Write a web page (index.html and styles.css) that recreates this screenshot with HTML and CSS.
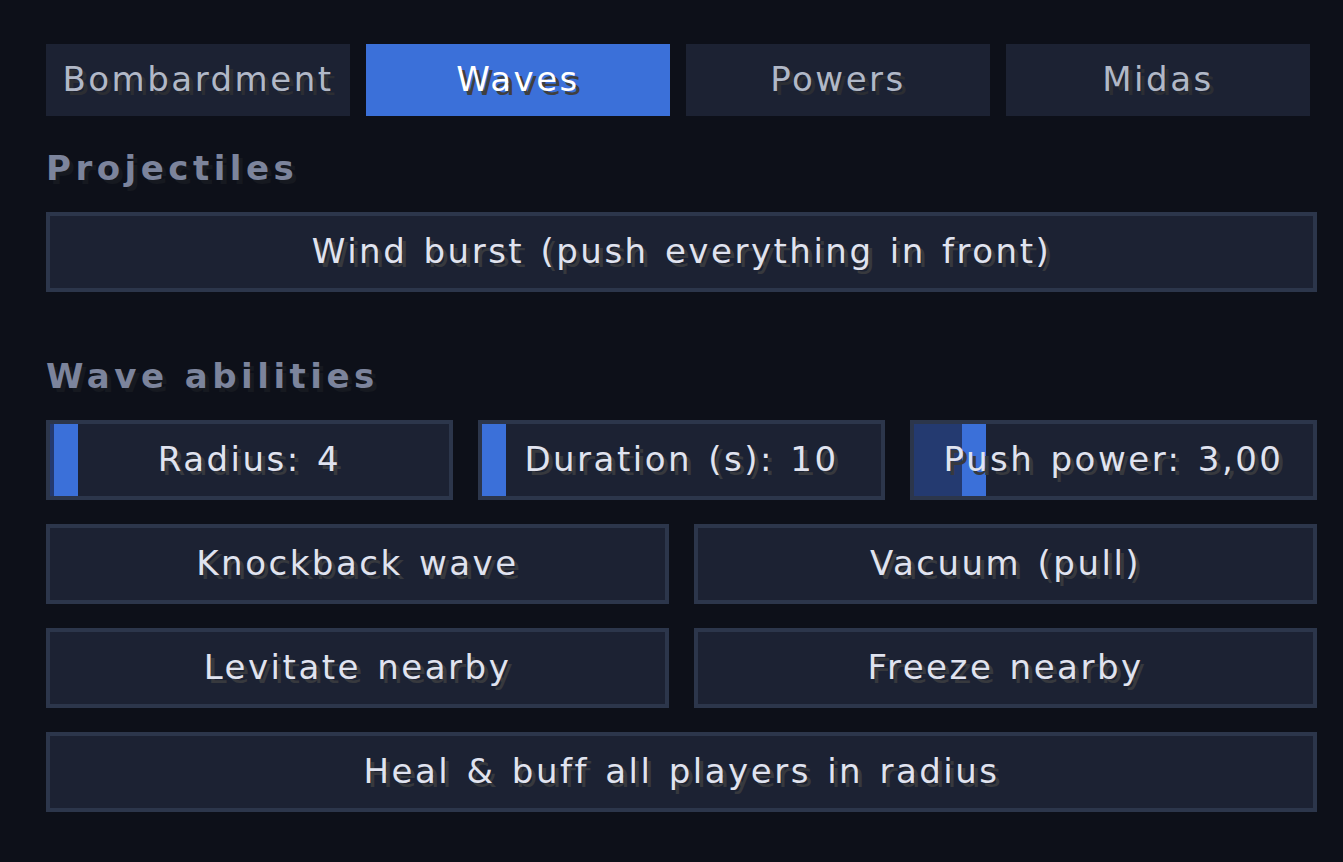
FILE: index.html
```html
<!DOCTYPE html>
<html lang="en">
<head>
<meta charset="utf-8">
<title>Waves</title>
<link rel="stylesheet" href="styles.css">
</head>
<body>
<div class="screen">
  <nav class="tabs">
    <div class="tab">Bombardment</div>
    <div class="tab active">Waves</div>
    <div class="tab">Powers</div>
    <div class="tab">Midas</div>
  </nav>

  <h2 class="heading first">Projectiles</h2>
  <div class="row one">
    <div class="btn">Wind burst (push everything in front)</div>
  </div>

  <h2 class="heading second">Wave abilities</h2>
  <div class="row three">
    <div class="btn slider">
      <span class="fill" style="width:4px"></span>
      <span class="thumb" style="left:4px"></span>
      <span class="label">Radius: 4</span>
    </div>
    <div class="btn slider">
      <span class="fill" style="width:0px"></span>
      <span class="thumb" style="left:0px"></span>
      <span class="label">Duration (s): 10</span>
    </div>
    <div class="btn slider">
      <span class="fill" style="width:48px"></span>
      <span class="thumb" style="left:48px"></span>
      <span class="label">Push power: 3,00</span>
    </div>
  </div>
  <div class="row two">
    <div class="btn">Knockback wave</div>
    <div class="btn">Vacuum (pull)</div>
  </div>
  <div class="row two">
    <div class="btn">Levitate nearby</div>
    <div class="btn">Freeze nearby</div>
  </div>
  <div class="row one">
    <div class="btn">Heal &amp; buff all players in radius</div>
  </div>
</div>
</body>
</html>
```

FILE: styles.css
```css
html, body {
  margin: 0;
  padding: 0;
  background: #0d1019;
  height: 100%;
}

body {
  font-family: "DejaVu Sans", "Liberation Sans", sans-serif;
  font-size: 34px;
  letter-spacing: 2.5px;
  color: #e0e3ef;
}

.screen {
  width: 1271px;
  padding: 44px 0 0 46px;
}

.tabs {
  display: grid;
  grid-template-columns: repeat(4, 304px);
  column-gap: 16px;
}

.tab {
  height: 72px;
  background: #1c2233;
  color: #b1b8c7;
  text-shadow: 4px 4px 0 #2c2e33;
  display: flex;
  align-items: center;
  justify-content: center;
  line-height: 1;
  padding-bottom: 2px;
  box-sizing: border-box;
}

.tab.active {
  background: #3b70d9;
  color: #ffffff;
  text-shadow: 4px 4px 0 #3f3f3f;
}

.heading {
  margin: 0 0 24px;
  font-size: 34px;
  line-height: 40px;
  font-weight: bold;
  letter-spacing: 4.5px;
  color: #7c849c;
  text-shadow: 4px 4px 0 #161920;
}

.heading.first {
  margin-top: 32px;
}

.heading.second {
  margin-top: 64px;
}

.row {
  display: grid;
  column-gap: 25px;
  margin-bottom: 24px;
}

.row.one { grid-template-columns: 1fr; }
.row.two { grid-template-columns: repeat(2, 1fr); }
.row.three { grid-template-columns: repeat(3, 1fr); }

.btn {
  height: 80px;
  box-sizing: border-box;
  border: 4px solid #2c364b;
  background: #1c2233;
  color: #e0e3ef;
  text-shadow: 4px 4px 0 #37393e;
  display: flex;
  align-items: center;
  justify-content: center;
  line-height: 1;
  padding-bottom: 2px;
  white-space: nowrap;
  word-spacing: 3px;
}

.slider {
  position: relative;
}

.slider .fill {
  position: absolute;
  top: 0;
  bottom: 0;
  left: 0;
  background: #243a70;
}

.slider .thumb {
  position: absolute;
  top: 0;
  bottom: 0;
  width: 24px;
  background: #3b70d9;
}

.slider .label {
  position: relative;
}
```
